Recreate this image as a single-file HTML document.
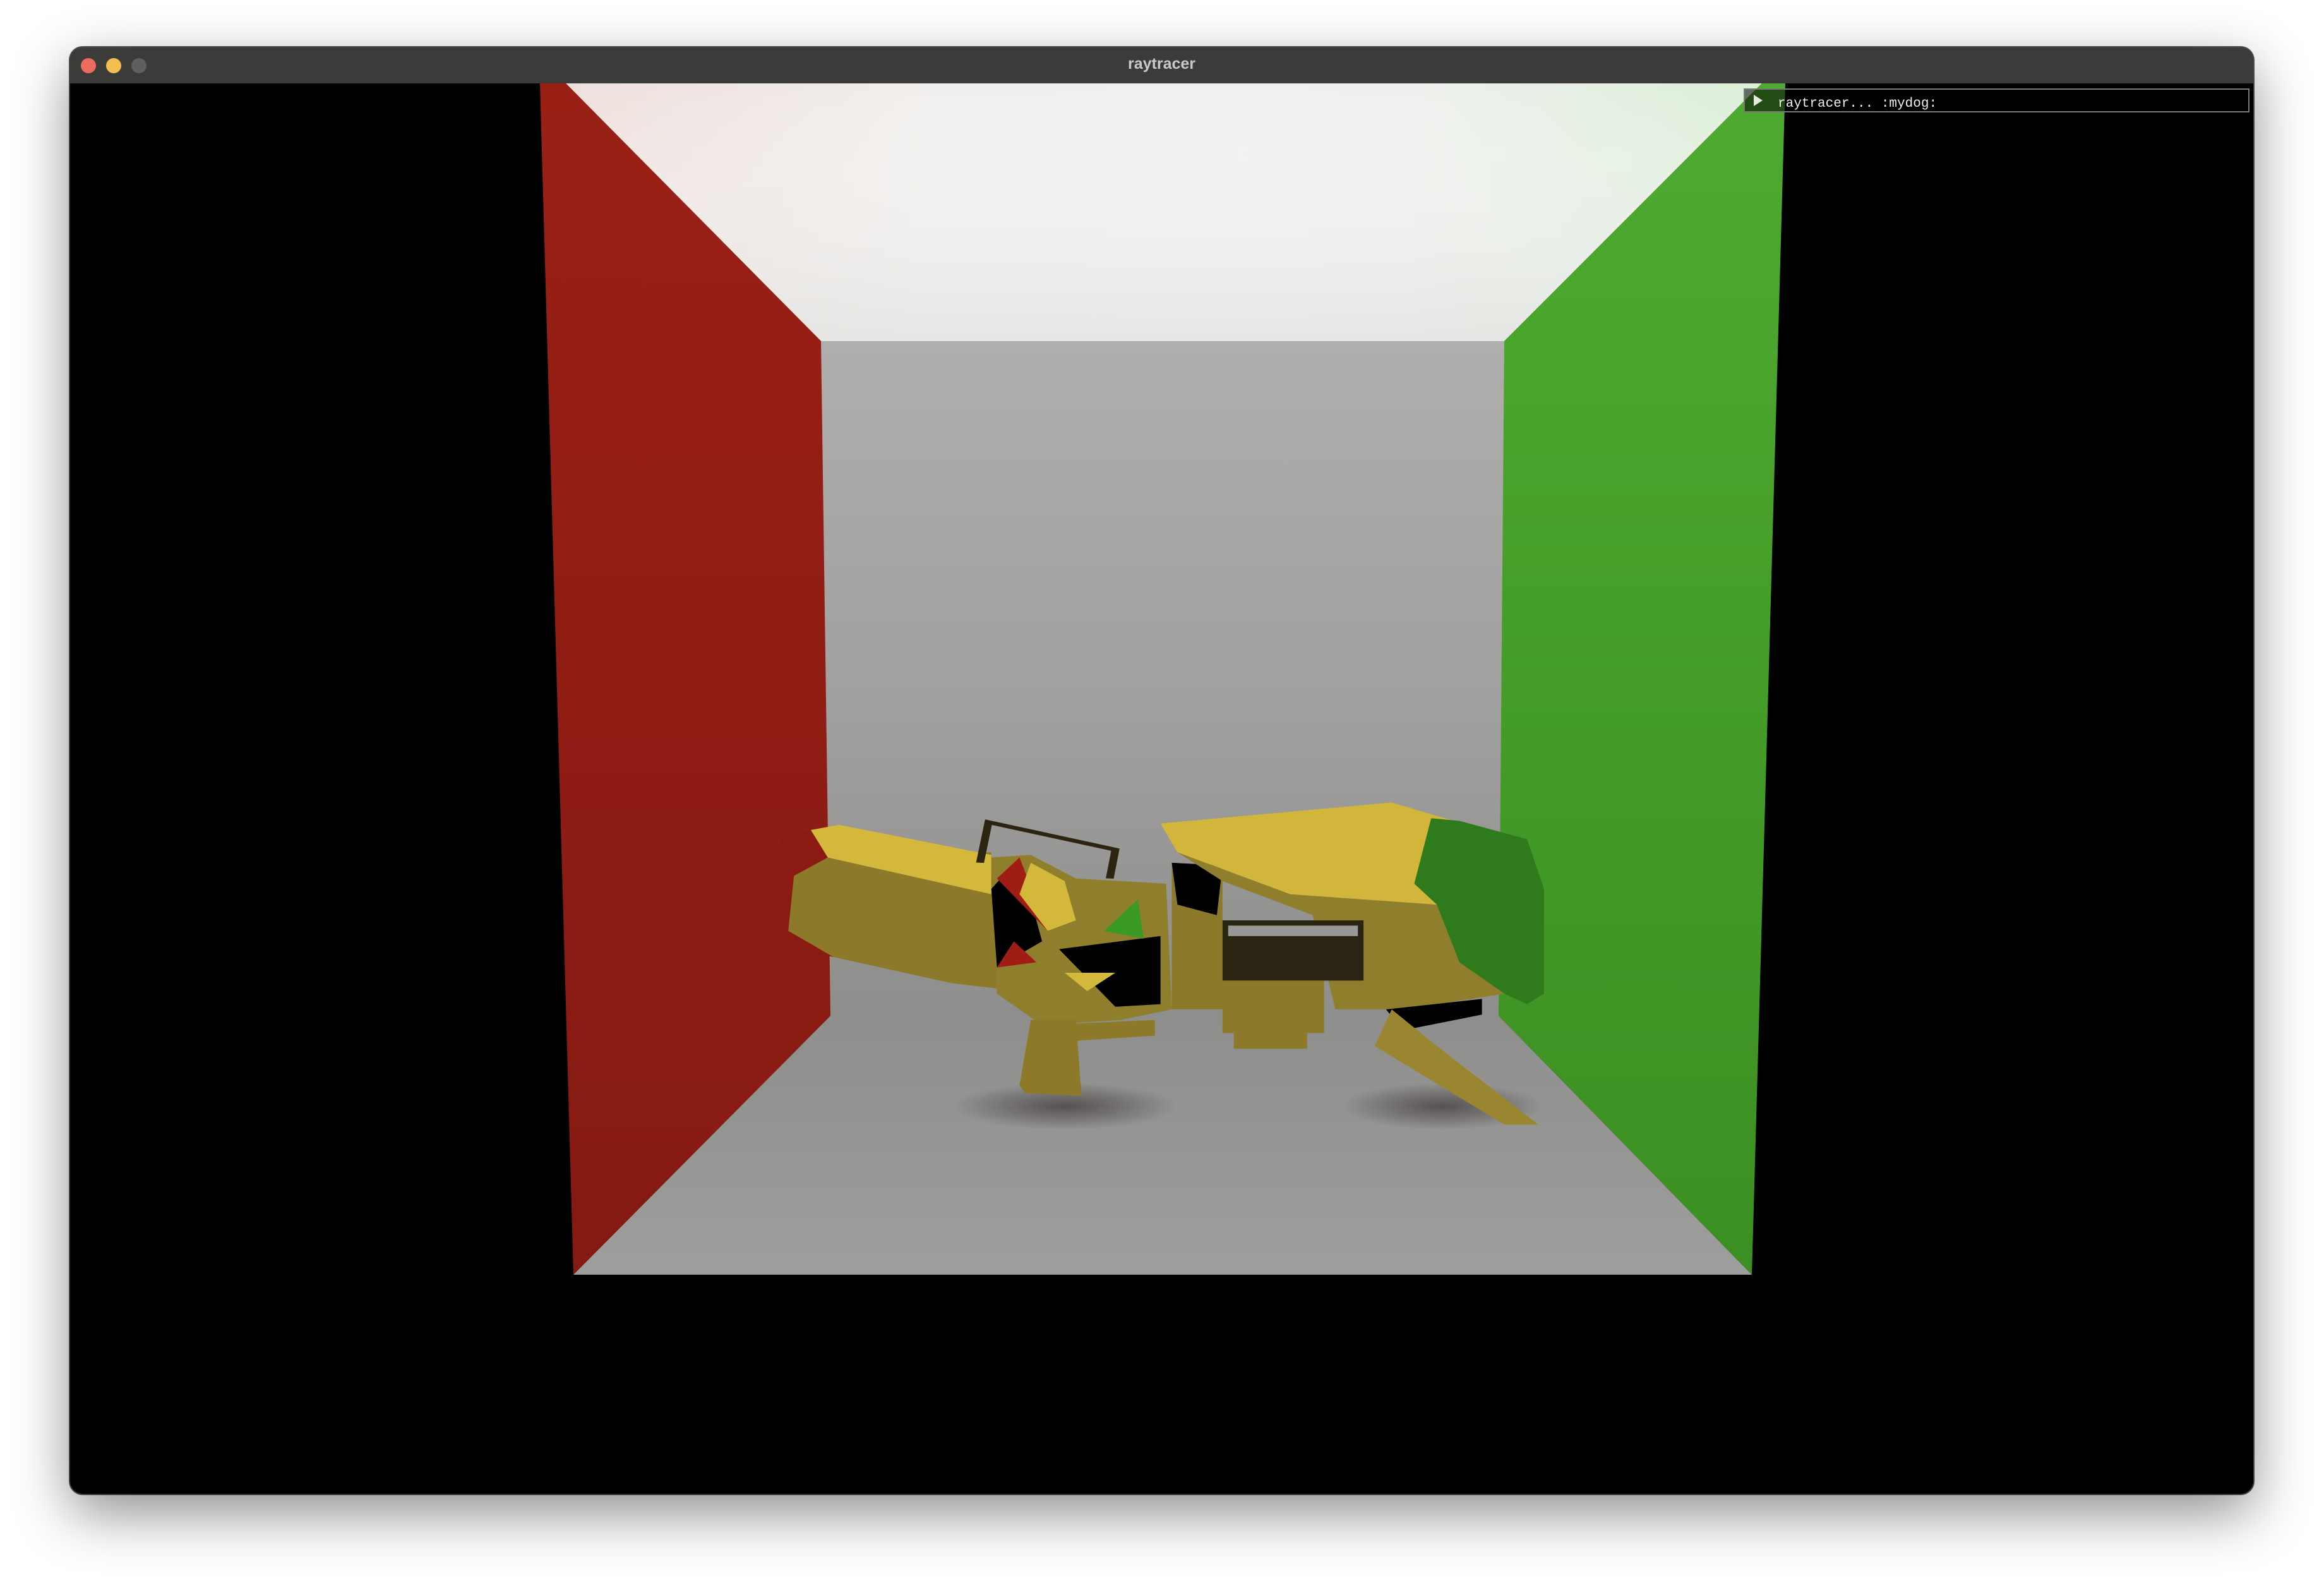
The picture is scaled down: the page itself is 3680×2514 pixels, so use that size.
<!DOCTYPE html>
<html><head><meta charset="utf-8"><style>
html,body{margin:0;padding:0;background:#fff;width:3680px;height:2514px;overflow:hidden}
.win{position:absolute;left:111px;top:75px;width:3457px;height:2290px;background:#000;border-radius:20px;overflow:hidden;box-shadow:0 30px 90px rgba(0,0,0,0.45),0 0 0 2px #555}
.tb{position:absolute;left:0;top:0;width:100%;height:57px;background:#3b3b3a}
.l{position:absolute;top:17px;width:24px;height:24px;border-radius:50%}
.tt{position:absolute;left:0;width:100%;top:12px;text-align:center;color:#c9c9c9;font:bold 25px "Liberation Sans",sans-serif}
svg{position:absolute;left:0;top:0}
.inp{position:absolute;left:2651px;top:66px;width:2797px;}
</style></head><body>
<div class="win">
<div class="tb"><div class="l" style="left:17px;background:#ec6a5e"></div><div class="l" style="left:57px;background:#f4bf4f"></div><div class="l" style="left:97px;background:#5e5e5e"></div><div class="tt">raytracer</div></div>
</div>
<svg width="3680" height="2514" viewBox="0 0 3680 2514">
<defs>
<linearGradient id="ceil" x1="0" y1="0" x2="1" y2="0"><stop offset="0" stop-color="#efe0dc"/><stop offset="0.3" stop-color="#f1efed"/><stop offset="0.7" stop-color="#eff0ee"/><stop offset="1" stop-color="#dcefd8"/></linearGradient>
<linearGradient id="ceilv" x1="0" y1="0" x2="0" y2="1"><stop offset="0" stop-color="#fff" stop-opacity="0"/><stop offset="1" stop-color="#e4e4e2" stop-opacity="0.8"/></linearGradient>
<linearGradient id="back" x1="0" y1="0" x2="0" y2="1"><stop offset="0" stop-color="#b0aeac"/><stop offset="0.5" stop-color="#a2a1a0"/><stop offset="1" stop-color="#8e8e8c"/></linearGradient>
<linearGradient id="floor" x1="0" y1="0" x2="0" y2="1"><stop offset="0" stop-color="#8e8e8c"/><stop offset="1" stop-color="#9e9e9c"/></linearGradient>
<linearGradient id="red" x1="0" y1="0" x2="0" y2="1"><stop offset="0" stop-color="#9a2016"/><stop offset="1" stop-color="#851a12"/></linearGradient>
<linearGradient id="grn" x1="0" y1="0" x2="0" y2="1"><stop offset="0" stop-color="#4eaa30"/><stop offset="1" stop-color="#3c8f22"/></linearGradient>
<radialGradient id="sh"><stop offset="0" stop-color="#3a3434" stop-opacity="0.7"/><stop offset="1" stop-color="#3a3434" stop-opacity="0"/></radialGradient>
</defs>
<polygon points="896,132 2790,132 2382,540 1300,540" fill="url(#ceil)"/>
<polygon points="896,132 2790,132 2382,540 1300,540" fill="url(#ceilv)"/>
<rect x="1300" y="540" width="1082" height="1070" fill="url(#back)"/>
<polygon points="908,2018 1315,1608 2373,1608 2774,2018" fill="url(#floor)"/>
<polygon points="855,132 896,132 1300,540 1315,1608 908,2018" fill="url(#red)"/>
<polygon points="2382,540 2790,132 2827,132 2774,2018 2373,1608" fill="url(#grn)"/>
<g transform="translate(1150,1200) scale(0.893,0.4146)">
<ellipse cx="600" cy="1330" rx="200" ry="90" fill="url(#sh)"/>
<ellipse cx="1270" cy="1330" rx="180" ry="90" fill="url(#sh)"/>
<polygon points="60,520 100,300 160,270 200,500 190,760 110,720" fill="#8a1a12"/>
<polygon points="120,450 180,380 470,360 480,880 400,860 190,760 110,660" fill="#8c7a2a"/>
<polygon points="150,275 200,255 470,370 470,520 180,380" fill="#d4b83c"/>
<polygon points="470,380 540,370 620,460 780,480 790,960 700,1000 560,1020 480,900" fill="#8f7e2c"/>
<polygon points="470,500 520,380 560,700 480,800" fill="#000"/>
<polygon points="590,730 770,680 770,940 690,950" fill="#000"/>
<polygon points="480,460 520,380 570,660" fill="#a01d16"/>
<polygon points="480,800 510,700 550,780" fill="#a01d16"/>
<polygon points="670,660 730,540 740,690" fill="#3a9a25"/>
<polygon points="540,400 600,470 620,620 570,660 520,520" fill="#d4b83c"/>
<polygon points="600,820 690,820 640,890" fill="#d4b83c"/>
<polyline points="450,400 465,245 690,350 680,460" fill="none" stroke="#2a2410" stroke-width="14"/>
<polygon points="540,1000 620,1000 630,1290 530,1280 520,1250" fill="#8c7a2a"/>
<polygon points="560,1020 760,1000 760,1060 620,1080" fill="#8c7a2a"/>
<polygon points="790,400 880,410 880,960 790,960" fill="#8c7a2a"/>
<polygon points="790,400 880,410 870,600 800,560" fill="#000"/>
<polygon points="800,360 1000,520 1260,560 1300,780 1380,900 1200,960 1080,960 1040,600 880,470" fill="#8f7e2c"/>
<polygon points="770,250 1180,170 1290,240 1260,560 1000,520 800,360" fill="#d2b63c"/>
<polygon points="1250,230 1300,240 1420,310 1450,500 1450,900 1420,940 1380,900 1300,780 1260,560 1220,480" fill="#2e7a1c"/>
<rect x="880" y="620" width="250" height="230" fill="#2a2412"/>
<rect x="890" y="640" width="230" height="40" fill="#9a9896"/>
<polygon points="880,850 1060,850 1060,1050 880,1050" fill="#8c7a2a"/>
<rect x="900" y="1050" width="130" height="60" fill="#8c7a2a"/>
<polygon points="1170,960 1340,920 1340,980 1200,1040" fill="#000"/>
<polygon points="1150,1100 1180,960 1260,1100 1440,1400 1380,1400" fill="#9a8630"/>
</g>
<rect x="2762" y="141" width="799" height="36" fill="rgba(0,0,0,0.55)" stroke="#7a7a7a" stroke-width="2"/>
<polygon points="2777,150 2791,159 2777,168" fill="#e8e8e8"/>
<text x="2815" y="169" font-family="Liberation Mono, monospace" font-size="21" fill="#f0f0f0">raytracer...  :mydog:</text>
</svg>
</body></html>
